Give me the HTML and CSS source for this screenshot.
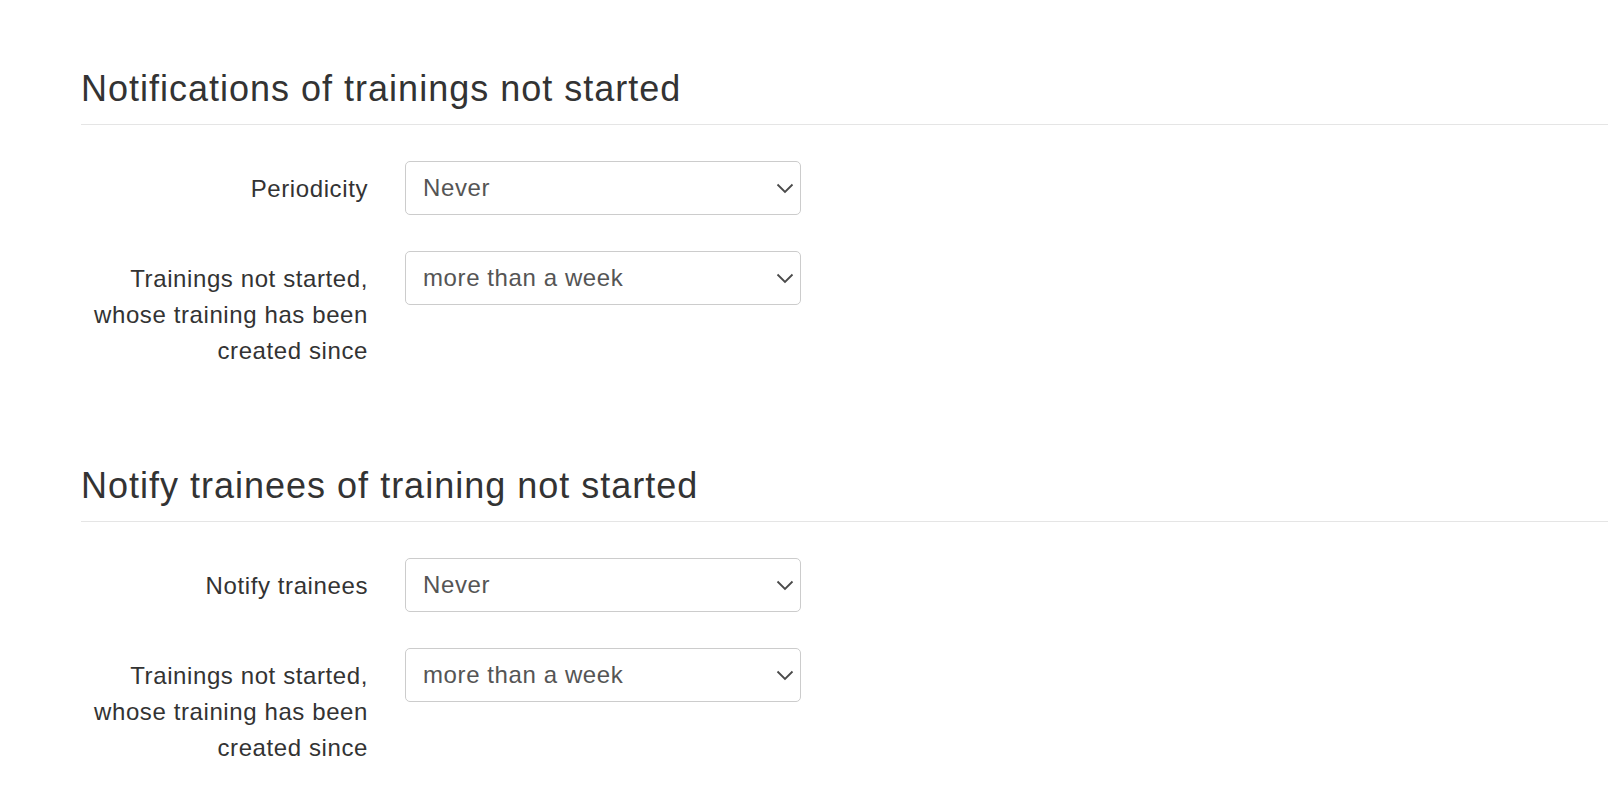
FILE: index.html
```html
<!DOCTYPE html>
<html lang="en">
<head>
<meta charset="utf-8">
<title>Notifications</title>
<link rel="stylesheet" href="styles.css">
</head>
<body>
<div class="page">
  <section class="section section-first">
    <h2 class="section-title">Notifications of trainings not started</h2>
    <div class="form-row">
      <label class="form-label">Periodicity</label>
      <div class="select"><span class="select-value">Never</span><svg class="chevron" width="18" height="11" viewBox="0 0 18 11"><path d="M1.5 1.5 L9 9 L16.5 1.5" fill="none" stroke="#4a4a4a" stroke-width="1.8"/></svg></div>
    </div>
    <div class="form-row">
      <label class="form-label">Trainings not started,<br>whose training has been<br>created since</label>
      <div class="select"><span class="select-value">more than a week</span><svg class="chevron" width="18" height="11" viewBox="0 0 18 11"><path d="M1.5 1.5 L9 9 L16.5 1.5" fill="none" stroke="#4a4a4a" stroke-width="1.8"/></svg></div>
    </div>
  </section>
  <section class="section section-next">
    <h2 class="section-title">Notify trainees of training not started</h2>
    <div class="form-row">
      <label class="form-label">Notify trainees</label>
      <div class="select"><span class="select-value">Never</span><svg class="chevron" width="18" height="11" viewBox="0 0 18 11"><path d="M1.5 1.5 L9 9 L16.5 1.5" fill="none" stroke="#4a4a4a" stroke-width="1.8"/></svg></div>
    </div>
    <div class="form-row">
      <label class="form-label">Trainings not started,<br>whose training has been<br>created since</label>
      <div class="select"><span class="select-value">more than a week</span><svg class="chevron" width="18" height="11" viewBox="0 0 18 11"><path d="M1.5 1.5 L9 9 L16.5 1.5" fill="none" stroke="#4a4a4a" stroke-width="1.8"/></svg></div>
    </div>
  </section>
</div>
</body>
</html>
```
FILE: styles.css
```css
html, body {
  margin: 0;
  padding: 0;
  background: #fff;
}
body {
  font-family: "Liberation Sans", Arial, Helvetica, sans-serif;
  color: #333;
}
.page {
  padding: 0 16px 0 81px;
}
.section-first {
  padding-top: 69px;
}
.section-next {
  padding-top: 61px;
}
.section-title {
  margin: 0 0 36px 0;
  font-size: 36px;
  line-height: 40px;
  letter-spacing: 1px;
  font-weight: 400;
  color: #333;
  padding-bottom: 15px;
  border-bottom: 1px solid #e5e5e5;
}
.form-row {
  display: flex;
  align-items: flex-start;
  gap: 37px;
  margin-bottom: 36px;
}
.form-label {
  width: 287px;
  flex: none;
  text-align: right;
  font-size: 24px;
  letter-spacing: 0.6px;
  line-height: 36px;
  padding-top: 10px;
  color: #333;
}
.select {
  width: 396px;
  height: 54px;
  box-sizing: border-box;
  border: 1px solid #ccc;
  border-radius: 5px;
  display: flex;
  align-items: center;
  justify-content: space-between;
  padding: 0 6px 0 17px;
  font-size: 24px;
  letter-spacing: 0.6px;
  color: #555;
  background: #fff;
}
.chevron {
  display: block;
  flex: none;
}
```
